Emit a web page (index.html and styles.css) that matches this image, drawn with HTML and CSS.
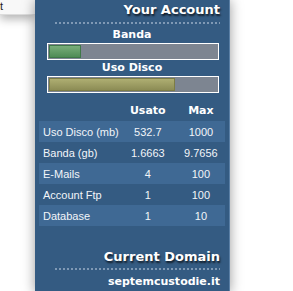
FILE: index.html
```html
<!DOCTYPE html>
<html lang="it">
<head>
    <meta charset="UTF-8">
    <meta name="viewport" content="width=device-width, initial-scale=1.0">
    <title>Your Account</title>
    <link rel="stylesheet" href="styles.css">
</head>
<body>
    <div class="layout">
        <div class="left-col">
            <div class="tab">t</div>
        </div>

        <aside class="sidebar">
            <h2 class="box-title">Your Account</h2>
            <div class="dots"></div>

            <p class="bar-label">Banda</p>
            <div class="bar"><div class="fill fill-green" style="width: 18%"></div></div>

            <p class="bar-label">Uso Disco</p>
            <div class="bar"><div class="fill fill-olive" style="width: 74%"></div></div>

            <table class="usage">
                <thead>
                    <tr>
                        <th></th>
                        <th>Usato</th>
                        <th>Max</th>
                    </tr>
                </thead>
                <tbody>
                    <tr><td>Uso Disco (mb)</td><td>532.7</td><td>1000</td></tr>
                    <tr><td>Banda (gb)</td><td>1.6663</td><td>9.7656</td></tr>
                    <tr><td>E-Mails</td><td>4</td><td>100</td></tr>
                    <tr><td>Account Ftp</td><td>1</td><td>100</td></tr>
                    <tr><td>Database</td><td>1</td><td>10</td></tr>
                </tbody>
            </table>

            <h2 class="box-title domain-title">Current Domain</h2>
            <div class="dots"></div>
            <p class="domain">septemcustodie.it</p>
        </aside>
    </div>
</body>
</html>
```

FILE: styles.css
```css
body {
    margin: 0;
    padding: 0;
    background-color: #fff;
    font-family: "Liberation Sans", Arial, sans-serif;
    overflow: hidden;
}

.layout {
    display: flex;
    align-items: flex-start;
    height: 291px;
}

.left-col {
    width: 35px;
    flex-shrink: 0;
}

.tab {
    height: 14px;
    background-color: #f8f8f8;
    border-bottom: 1px solid #dcdcdc;
    box-shadow: 0 4px 10px rgba(0, 0, 0, 0.3);
    font-size: 11px;
    line-height: 13px;
    color: #222;
}

.sidebar {
    width: 186px;
    height: 291px;
    flex-shrink: 0;
    padding: 2px 4px 0 4px;
    background-color: #345b82;
    border-right: 1px solid #5b80a6;
    box-shadow: 0 0 12px rgba(0, 0, 0, 0.4);
    color: #fff;
}

.box-title {
    margin: 0;
    padding-right: 5px;
    font-family: "DejaVu Sans", Verdana, sans-serif;
    font-size: 13px;
    line-height: 16px;
    font-weight: bold;
    text-align: right;
    text-shadow: 1px 2px 2px rgba(0, 0, 0, 0.7);
}

.dots {
    height: 2px;
    margin: 4px 5px 0 16px;
    background-image: linear-gradient(to right, #7f99b5 2px, transparent 2px);
    background-size: 4px 2px;
}

.bar-label {
    margin: 4px 0 0 0;
    font-family: "DejaVu Sans", Verdana, sans-serif;
    font-size: 11px;
    line-height: 13px;
    font-weight: bold;
    text-align: center;
}

.bar + .bar-label {
    margin-top: 1px;
}

.bar {
    width: 168px;
    height: 13px;
    margin: 2px 0 0 8px;
    padding: 1px;
    border: 1px solid #fff;
    background-color: #7d8591;
}

.fill {
    height: 11px;
}

.fill-green {
    border: 1px solid #3f7848;
    background: linear-gradient(#79ae7a, #4f8c56);
}

.fill-olive {
    border: 1px solid #7c7c45;
    background: linear-gradient(#aeae72, #8c8c55);
}

.usage {
    width: 186px;
    margin-top: 6px;
    border-collapse: collapse;
    font-size: 11px;
    color: #f2f5f9;
}

.usage th {
    height: 22px;
    padding: 0;
    font-family: "DejaVu Sans", Verdana, sans-serif;
    font-weight: bold;
    color: #fff;
    text-align: center;
    line-height: 13px;
}

.usage th:first-child {
    width: 78px;
}

.usage th:nth-child(2) {
    width: 58px;
}

.usage td {
    height: 21px;
    padding: 1px 0 0 0;
    text-align: center;
    box-sizing: border-box;
}

.usage td:first-child {
    padding-left: 4px;
    text-align: left;
    white-space: nowrap;
}

.usage tbody tr:nth-child(odd) {
    background-color: #3f6994;
}

.domain-title {
    margin-top: 23px;
}

.domain-title + .dots {
    margin-top: 3px;
}

.domain {
    margin: 5px 0 0 0;
    padding-right: 5px;
    font-family: "DejaVu Sans", Verdana, sans-serif;
    font-size: 11px;
    line-height: 13px;
    font-weight: bold;
    text-align: right;
}
```
